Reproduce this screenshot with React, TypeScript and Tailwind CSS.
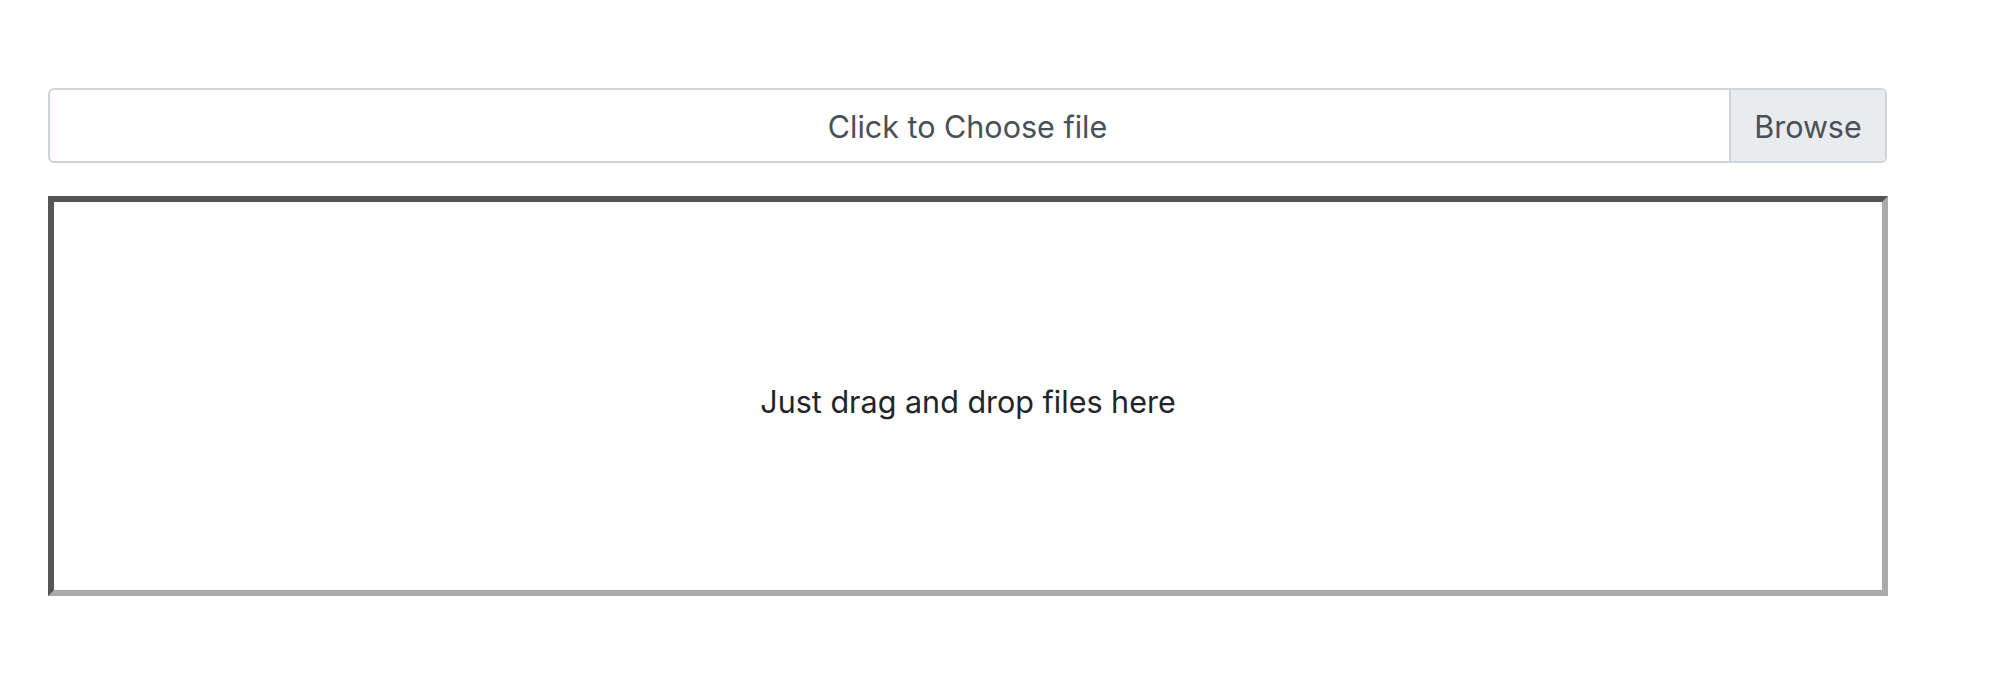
const App: React.FC = () => {
  return (
    <div className="min-h-screen bg-white pl-[48px] pt-[88px] font-['Inter',sans-serif]">
      <div className="w-[1839px]">
        {/* File input */}
        <label className="grid h-[75px] cursor-pointer rounded-[6px] border-2 border-[#ced4da] bg-white">
          <span className="col-start-1 row-start-1 flex items-center justify-center pt-[2px] text-[30.5px] text-[#495057]">
            Click to Choose file
          </span>
          <span className="col-start-1 row-start-1 flex w-[156px] items-center justify-center justify-self-end rounded-r-[4px] border-l-2 border-[#ced4da] bg-[#e9ecef] pt-[2px] text-[30.5px] text-[#495057]">
            Browse
          </span>
        </label>

        {/* Drop zone */}
        <div className="mt-[33px] flex h-[400px] w-[1840px] items-center justify-center border-[6px] border-t-[#555555] border-l-[#555555] border-r-[#aaaaaa] border-b-[#aaaaaa] pt-[12px] text-[30.5px] text-[#212529]">
          Just drag and drop files here
        </div>
      </div>
    </div>
  );
};

export default App;
